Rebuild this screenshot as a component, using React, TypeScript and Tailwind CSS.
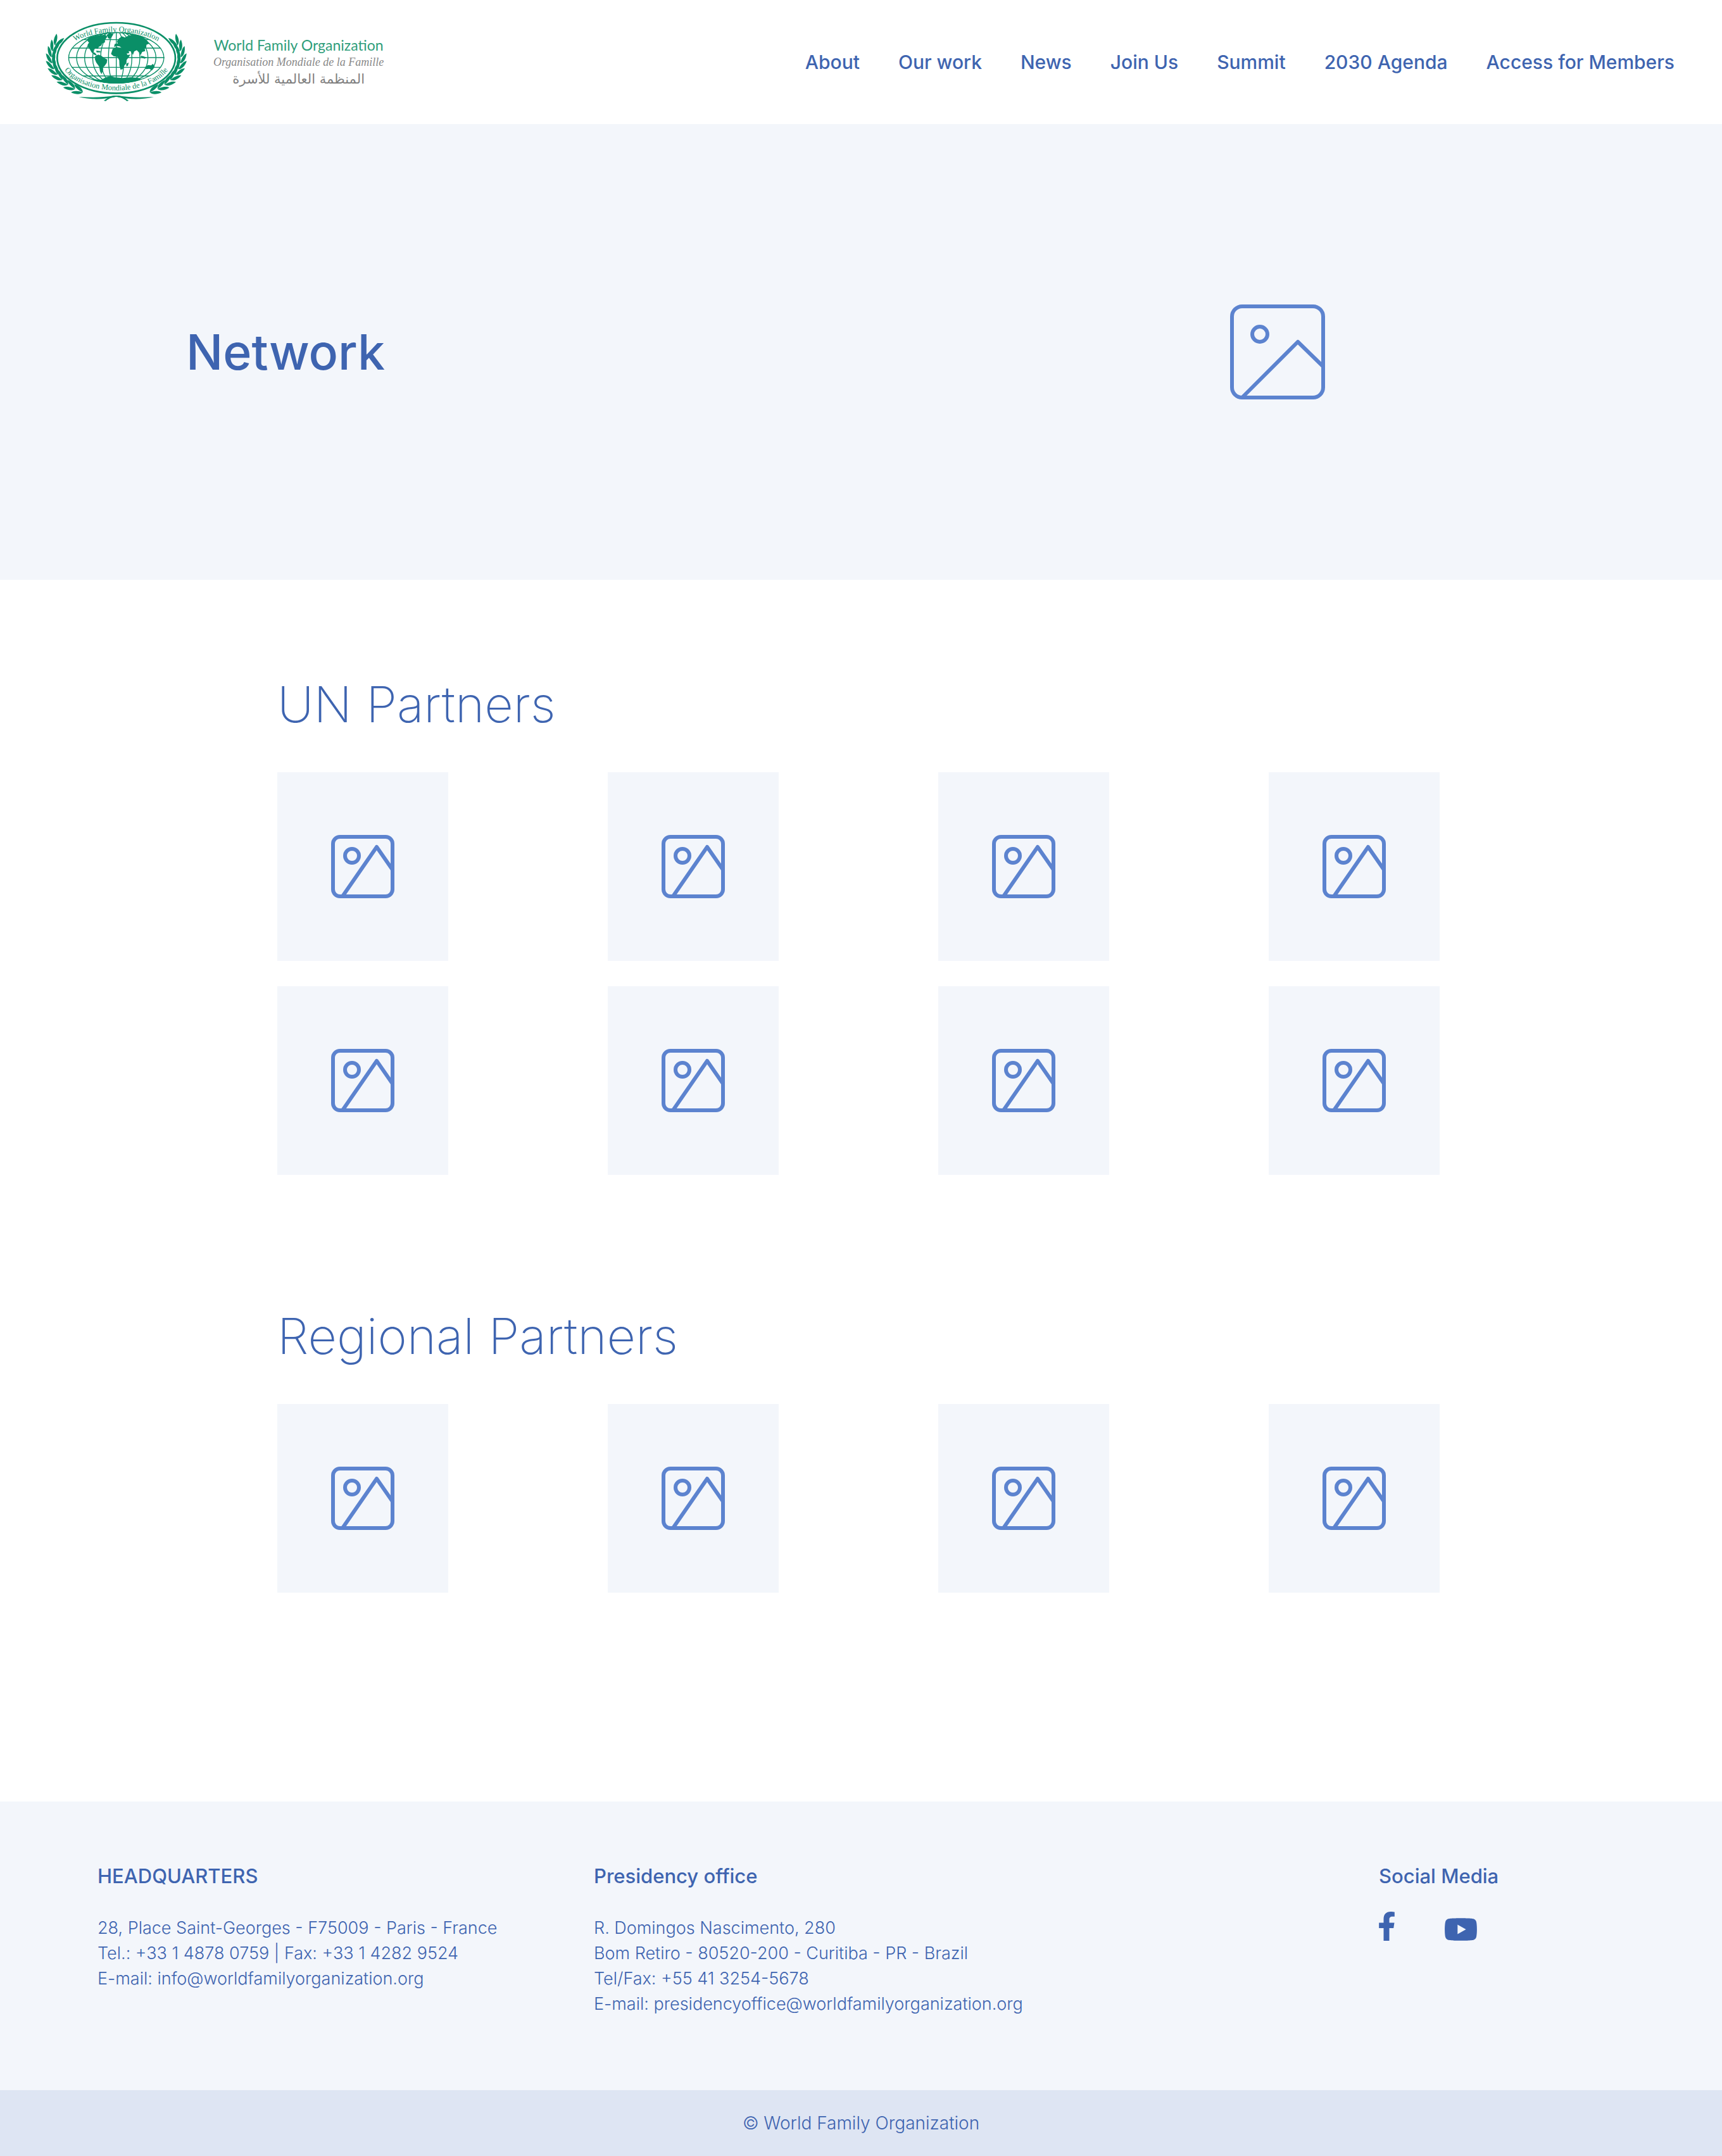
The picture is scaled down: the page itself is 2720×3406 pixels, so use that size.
const navItems = ["About", "Our work", "News", "Join Us", "Summit", "2030 Agenda", "Access for Members"];

const offices = [
  {
    title: "HEADQUARTERS",
    lines: ["28, Place Saint-Georges - F75009 - Paris - France", "Tel.: +33 1 4878 0759 | Fax: +33 1 4282 9524"],
    email: "info@worldfamilyorganization.org",
  },
  {
    title: "Presidency office",
    lines: ["R. Domingos Nascimento, 280", "Bom Retiro - 80520-200 - Curitiba - PR - Brazil", "Tel/Fax: +55 41 3254-5678"],
    email: "presidencyoffice@worldfamilyorganization.org",
  },
];

// Leaves grow in pairs along an ellipse around the globe.
const leaves = Array.from({ length: 10 }, (_, i) => {
  const a = ((238 - i * 8.6) * Math.PI) / 180;
  const x = 371 + 306 * Math.cos(a);
  const y = 215 - 190 * Math.sin(a);
  const dir = (Math.atan2(190 * Math.cos(a), 306 * Math.sin(a)) * 180) / Math.PI;
  return { x, y, dir };
});

function Laurel() {
  return (
    <g>
      {leaves.map(({ x, y, dir }, i) => (
        <g key={i} transform={`translate(${x} ${y}) rotate(${dir})`}>
          <path d="M-4 0C2 -15 22 -23 48 -21C40 -8 20 -1 -4 0Z" />
          <path d="M-4 0C2 15 22 23 48 21C40 8 20 1 -4 0Z" />
        </g>
      ))}
      <path d="M193 399C250 402 310 403 360 393C390 391 412 402 430 417L421 419C404 405 386 399 366 399C310 413 240 412 193 399Z" />
    </g>
  );
}

function Emblem() {
  return (
    <svg viewBox="0 0 750 480" className="mt-1 h-40 w-[250px] shrink-0" fill="#0a8f67" role="img" aria-label="World Family Organization emblem">
      <defs>
        <path id="arc-top" d="M115 215A256 124 0 0 1 627 215" />
        <path id="arc-bottom" d="M107 215A264 153 0 0 0 635 215" />
        <clipPath id="globe">
          <ellipse cx="371" cy="214" rx="228" ry="122" />
        </clipPath>
      </defs>
      <Laurel />
      <g transform="translate(742 0) scale(-1 1)">
        <Laurel />
      </g>
      <ellipse cx="371" cy="215" rx="280" ry="167" fill="#fff" stroke="#0a8f67" strokeWidth="8" />
      <g fill="none" stroke="#0a8f67" strokeWidth="4" clipPath="url(#globe)">
        <ellipse cx="371" cy="214" rx="226" ry="120" strokeWidth="5" />
        <ellipse cx="371" cy="214" rx="188" ry="122" />
        <ellipse cx="371" cy="214" rx="150" ry="124" />
        <ellipse cx="371" cy="214" rx="112" ry="126" />
        <ellipse cx="371" cy="214" rx="74" ry="128" />
        <ellipse cx="371" cy="214" rx="37" ry="130" />
        <path d="M371 92V336M143 128H600M143 168H600M143 213H600M143 259H600M143 300H600" />
      </g>
      <g clipPath="url(#globe)">
        <path d="M234 124L250 113L300 106L322 106L326 118L316 130L318 140L304 146L300 156L288 162L284 172L272 170L262 177L262 188L270 190L280 203L268 200L254 188L246 174L238 164L235 152L242 142L236 136Z" />
        <path d="M326 104L345 96L357 103L350 114L338 126L331 118Z" />
        <path d="M271 206L285 199L300 204L312 214L328 222L326 238L316 252L308 260L309 270L301 292L294 278L290 256L276 236L270 222Z" />
        <path d="M354 172L372 162L392 167L408 167L416 186L424 200L438 199L428 214L420 224L419 240L410 250L402 268L391 270L386 250L385 226L376 209L358 206L346 196Z" />
        <path d="M360 162L364 148L378 146L374 136L384 122L398 112L412 118L430 108L452 104L486 108L512 126L528 146L514 152L513 164L506 170L508 182L494 186L486 202L480 190L468 178L456 184L450 200L440 184L430 182L432 192L418 194L404 172L386 160L376 158Z" />
        <path d="M508 262L520 248L536 250L545 242L553 258L540 274L528 266L512 268Z" />
        <path d="M418 242L430 236L426 252L419 254Z" />
        <path d="M484 204L498 206L514 212L506 218L492 214ZM276 180L296 182L296 188L278 188Z" />
        <path d="M255 316L300 318L322 306L345 300L362 306L400 310L440 306L478 310L490 318L460 336L371 342L285 336Z" />
      </g>
      <g fontFamily="'Liberation Serif', serif" fontSize="37">
        <text textAnchor="middle">
          <textPath href="#arc-top" startOffset="50%">World Family Organization</textPath>
        </text>
        <text textAnchor="middle">
          <textPath href="#arc-bottom" startOffset="50%">Organisation Mondiale de la Famille</textPath>
        </text>
      </g>
    </svg>
  );
}

function HeroPlaceholder() {
  return (
    <svg viewBox="0 0 150 150" className="size-[150px]" fill="none" stroke="#5c83cf" strokeWidth="6" strokeLinejoin="round" aria-hidden="true">
      <rect x="3" y="3" width="144" height="144" rx="16" />
      <circle cx="47" cy="47" r="12" />
      <path d="M19 147L107 59L147 98" />
    </svg>
  );
}

function PartnerCard() {
  return (
    <li className="flex h-[298px] items-center justify-center bg-[#f3f6fb]">
      <svg viewBox="0 0 100 100" className="size-[100px]" fill="none" stroke="#5c83cf" strokeWidth="6" strokeLinejoin="round" role="img" aria-label="Partner logo">
        <rect x="3" y="3" width="94" height="94" rx="11" />
        <circle cx="33" cy="33" r="11" />
        <path d="M18 97L72 19L97 55" />
      </svg>
    </li>
  );
}

function Partners({ title, count }: { title: string; count: number }) {
  return (
    <section>
      <h2 className="text-[79px] leading-[88px] font-extralight">{title}</h2>
      <ul className="mt-16 grid grid-cols-[repeat(4,270px)] justify-between gap-y-10">
        {Array.from({ length: count }, (_, i) => (
          <PartnerCard key={i} />
        ))}
      </ul>
    </section>
  );
}

export default function App() {
  return (
    <div className="flex min-h-screen flex-col bg-white font-['Inter',sans-serif] text-[#3e64b0]">
      <header className="flex h-[196px] items-center justify-between pr-[75px] pl-[60px]">
        <a href="#" className="flex items-center gap-[27px]">
          <Emblem />
          <span className="flex flex-col items-center whitespace-nowrap">
            <span className="font-['Lato',sans-serif] text-[23px] leading-[30px] text-[#2f9e7b]">World Family Organization</span>
            <span className="font-['Liberation_Serif',serif] text-[18px] leading-[24px] text-[#888] italic">Organisation Mondiale de la Famille</span>
            <span dir="rtl" lang="ar" className="font-['DejaVu_Sans',sans-serif] text-[21px] leading-[30px] text-[#808080]">
              المنظمة العالمية للأسرة
            </span>
          </span>
        </a>
        <nav className="flex gap-[61px] text-[30px] leading-10 font-medium whitespace-nowrap">
          {navItems.map((item) => (
            <a key={item} href="#">
              {item}
            </a>
          ))}
        </nav>
      </header>

      <section className="grid h-[720px] grid-cols-2 items-center bg-[#f3f6fb]">
        <h1 className="pl-[294px] text-[77px] leading-[88px] font-medium">Network</h1>
        <div className="flex justify-center pr-11">
          <HeroPlaceholder />
        </div>
      </section>

      <main className="flex flex-col gap-[210px] pt-[152px] pr-[446px] pb-[330px] pl-[438px]">
        <Partners title="UN Partners" count={8} />
        <Partners title="Regional Partners" count={4} />
      </main>

      <footer>
        <div className="grid grid-cols-[784px_1fr_388px] bg-[#f3f6fb] px-[154px] pt-[98px] pb-[116px]">
          {offices.map((office) => (
            <section key={office.title}>
              <h3 className="text-[31px] leading-10 font-medium">{office.title}</h3>
              <address className="mt-[42px] text-[27px] leading-10 font-light not-italic">
                {office.lines.map((line) => (
                  <p key={line}>{line}</p>
                ))}
                <p>
                  E-mail: <a href={`mailto:${office.email}`}>{office.email}</a>
                </p>
              </address>
            </section>
          ))}
          <section>
            <h3 className="text-[31px] leading-10 font-medium">Social Media</h3>
            <div className="mt-9 flex items-end gap-[79px]">
              <a href="#" aria-label="Facebook">
                <svg viewBox="22 0 276 512" className="h-[46px] w-[25px]" fill="currentColor">
                  <path d="M279.14 288l14.22-92.66h-88.91v-60.13c0-25.35 12.42-50.06 52.24-50.06h40.42V6.26S260.43 0 225.36 0c-73.22 0-121.08 44.38-121.08 124.72v70.62H22.89V288h81.39v224h100.17V288z" />
                </svg>
              </a>
              <a href="#" aria-label="YouTube">
                <svg viewBox="14 64 548 384" className="h-9 w-[51px]" fill="currentColor">
                  <path d="M549.655 124.083c-6.281-23.65-24.787-42.276-48.284-48.597C458.781 64 288 64 288 64S117.22 64 74.629 75.486c-23.497 6.322-42.003 24.947-48.284 48.597-11.412 42.867-11.412 132.305-11.412 132.305s0 89.438 11.412 132.305c6.281 23.65 24.787 41.5 48.284 47.821C117.22 448 288 448 288 448s170.78 0 213.371-11.486c23.497-6.321 42.003-24.171 48.284-47.821 11.412-42.867 11.412-132.305 11.412-132.305s0-89.438-11.412-132.305zm-317.51 213.508V175.185l142.739 81.205-142.739 81.201z" />
                </svg>
              </a>
            </div>
          </section>
        </div>
        <p className="bg-[#dee5f3] py-8 text-center text-[28px] leading-10 font-light">© World Family Organization</p>
      </footer>
    </div>
  );
}
